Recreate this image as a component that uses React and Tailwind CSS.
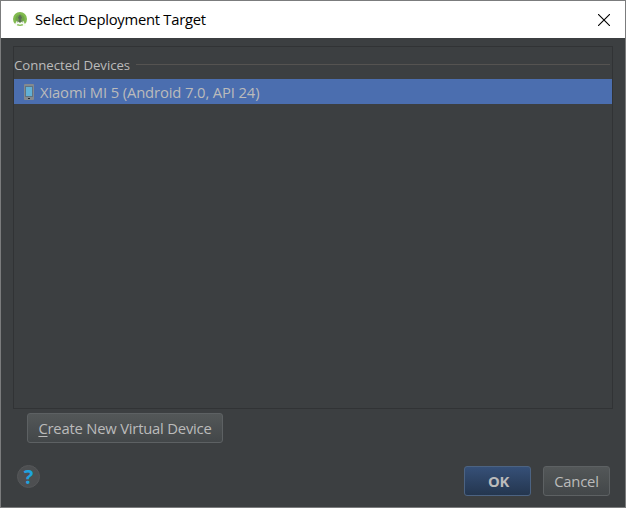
const font = "font-['Open_Sans','Noto_Sans',sans-serif]";

function StudioIcon() {
  return (
    <svg width="14" height="16" viewBox="0 0 14 16" className="mt-px shrink-0">
      <circle cx="7" cy="7" r="7" fill="#82bb4f" />
      <circle cx="7" cy="7" r="4.6" fill="#6fa548" />
      <path d="M1.8 12.6L3.8 8.8L7 11L10.2 8.8L12.8 13.8L11 14.6L9.4 12L7 12.8L4.6 12L3.6 13.8Z" fill="#f8fbf6" />
      <path d="M7 2.6L9 5.4L8 7.6V10H6V7.6L5 5.4Z" fill="#5b6b58" />
      <path d="M6 7.5L4.4 10.4M8 7.5L9.6 10.4" stroke="#6c7f64" strokeWidth=".9" />
    </svg>
  );
}

function PhoneIcon() {
  return (
    <svg width="10" height="16" viewBox="0 0 10 16" className="shrink-0">
      <rect x="0" y="0" width="10" height="16" rx="1" fill="#858a8e" />
      <rect x="1" y="2" width="8" height="11" fill="#5e7484" />
      <rect x="2" y="3" width="6" height="9" fill="#62b1d6" />
      <rect x="4" y="14" width="2" height="1" fill="#25292c" />
    </svg>
  );
}

const buttonBase =
  "flex h-[30px] items-center justify-center rounded-[3px] border text-[14.8px] leading-none tracking-[-0.21px] whitespace-nowrap";

export default function App() {
  return (
    <div className={`flex h-[508px] w-[626px] flex-col border border-[#7b7c7d] bg-[#3c3f41] text-[#bbbbbb] ${font}`}>
      <header className="flex h-[37px] shrink-0 items-center bg-white pl-3 pr-[15px] text-black">
        <StudioIcon />
        <h1 className="ml-2 text-[14.8px] font-normal leading-none tracking-[-0.26px] whitespace-nowrap">
          Select Deployment Target
        </h1>
        <svg width="12" height="12" viewBox="0 0 12 12" className="ml-auto">
          <path d="M0 0L12 12M12 0L0 12" stroke="#000" strokeWidth="1.1" />
        </svg>
      </header>

      <main className="ml-3 mr-3 mt-2 flex h-[363px] shrink-0 flex-col border border-[#313335]">
        <div className="flex h-8 items-center pr-[2px]">
          <h2 className="mt-[5px] text-[13.2px] font-normal leading-none tracking-[-0.03px] whitespace-nowrap">
            Connected Devices
          </h2>
          <div className="ml-[6px] mt-[3px] h-px grow bg-[#555351]" />
        </div>
        <div className="flex h-[25px] items-center bg-[#4b6eaf] pl-[10px]">
          <PhoneIcon />
          <span className="ml-[6px] mt-px text-[14.8px] leading-none tracking-[-0.13px] whitespace-nowrap">
            Xiaomi MI 5 (Android 7.0, API 24)
          </span>
        </div>
      </main>

      <div className="ml-[26px] mt-1 flex">
        <button className={`${buttonBase} w-[196px] border-[#5d6163] bg-linear-to-b from-[#535758] to-[#434749]`}>
          <span>
            <span className="underline underline-offset-2">C</span>reate New Virtual Device
          </span>
        </button>
      </div>

      <footer className="mt-[23px] flex pl-4 pr-[15px]">
        <div className="-mt-px flex h-[23px] w-[23px] items-center justify-center rounded-full border border-[#555759] bg-[#4d4f51] text-[20px] font-bold leading-none text-[#1fa3de]">
          ?
        </div>
        <button className={`${buttonBase} ml-auto w-[67px] border-[#4c6382] bg-linear-to-b from-[#365078] to-[#24364f] pl-[2px] font-bold`}>
          OK
        </button>
        <button className={`${buttonBase} ml-3 w-[67px] border-[#5d6163] bg-linear-to-b from-[#535758] to-[#434749]`}>
          Cancel
        </button>
      </footer>
    </div>
  );
}
